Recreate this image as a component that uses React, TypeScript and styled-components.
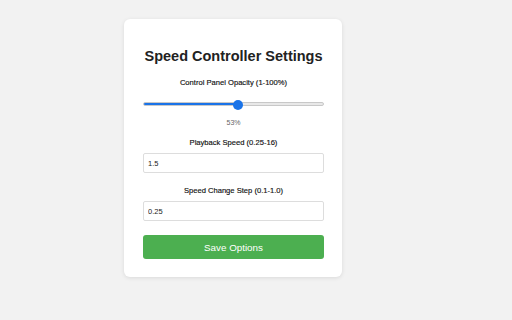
import React, { useState } from 'react'
import styled, { createGlobalStyle } from 'styled-components'

const GlobalStyle = createGlobalStyle`
  html, body {
    margin: 0;
    padding: 0;
    background: #f2f2f2;
    font-family: "Liberation Sans", Arial, sans-serif;
  }
`

const Page = styled.div`
  width: 512px;
  height: 320px;
  padding-top: 19px;
  box-sizing: border-box;
`

const Card = styled.div`
  width: 218px;
  margin-left: 124px;
  box-sizing: border-box;
  padding: 29px 18px 18px 19px;
  background: #fff;
  border-radius: 6px;
  box-shadow: 0 1px 4px rgba(0, 0, 0, 0.1);
  display: flex;
  flex-direction: column;
`

const Title = styled.h1`
  margin: 0 0 13px;
  font-size: 14.5px;
  line-height: 17px;
  font-weight: 700;
  color: #222;
  text-align: center;
`

const Field = styled.div<{ $gap?: number }>`
  display: flex;
  flex-direction: column;
  margin-bottom: ${({ $gap }) => $gap ?? 13}px;
`

const Label = styled.label`
  display: block;
  font-size: 7.6px;
  line-height: 9px;
  font-weight: 400;
  color: #111;
  -webkit-text-stroke: 0.15px #111;
  text-align: center;
  margin-bottom: 6px;
`

const Range = styled.input<{ $pct: number }>`
  -webkit-appearance: none;
  appearance: none;
  width: 100%;
  height: 10px;
  margin: 6px 0 0;
  background: transparent;
  &::-webkit-slider-runnable-track {
    height: 4px;
    border-radius: 2px;
    box-sizing: border-box;
    background: linear-gradient(
      to right,
      #1a73e8 0,
      #1a73e8 ${({ $pct }) => $pct}%,
      #e8e8e8 ${({ $pct }) => $pct}%,
      #e8e8e8 100%
    );
    border: 0.5px solid #c8c8c8;
  }
  &::-webkit-slider-thumb {
    -webkit-appearance: none;
    width: 10px;
    height: 10px;
    margin-top: -3.5px;
    border-radius: 50%;
    background: #1a73e8;
    border: none;
  }
`

const Value = styled.div`
  font-size: 7px;
  line-height: 9px;
  color: #666;
  text-align: center;
  margin-top: 9px;
`

const TextInput = styled.input`
  width: 100%;
  height: 20px;
  box-sizing: border-box;
  padding: 0 4px;
  border: 1px solid #ddd;
  border-radius: 2px;
  font-family: inherit;
  font-size: 7.5px;
  color: #222;
  background: #fff;
  outline: none;
`

const SaveButton = styled.button`
  width: 100%;
  height: 24px;
  margin-top: 1px;
  border: none;
  border-radius: 3px;
  background: #4caf50;
  color: #fff;
  font-family: inherit;
  font-size: 9.8px;
  cursor: pointer;
`

export default function App() {
  const [opacity, setOpacity] = useState(53)
  const [speed, setSpeed] = useState('1.5')
  const [step, setStep] = useState('0.25')

  return (
    <Page>
      <GlobalStyle />
      <Card>
        <Title>Speed Controller Settings</Title>
        <Field $gap={11}>
          <Label>Control Panel Opacity (1-100%)</Label>
          <Range
            type="range"
            min={1}
            max={100}
            value={opacity}
            $pct={((opacity - 1) / 99) * 100}
            onChange={(e) => setOpacity(Number(e.target.value))}
          />
          <Value>{opacity}%</Value>
        </Field>
        <Field>
          <Label>Playback Speed (0.25-16)</Label>
          <TextInput value={speed} onChange={(e) => setSpeed(e.target.value)} />
        </Field>
        <Field>
          <Label>Speed Change Step (0.1-1.0)</Label>
          <TextInput value={step} onChange={(e) => setStep(e.target.value)} />
        </Field>
        <SaveButton>Save Options</SaveButton>
      </Card>
    </Page>
  )
}
